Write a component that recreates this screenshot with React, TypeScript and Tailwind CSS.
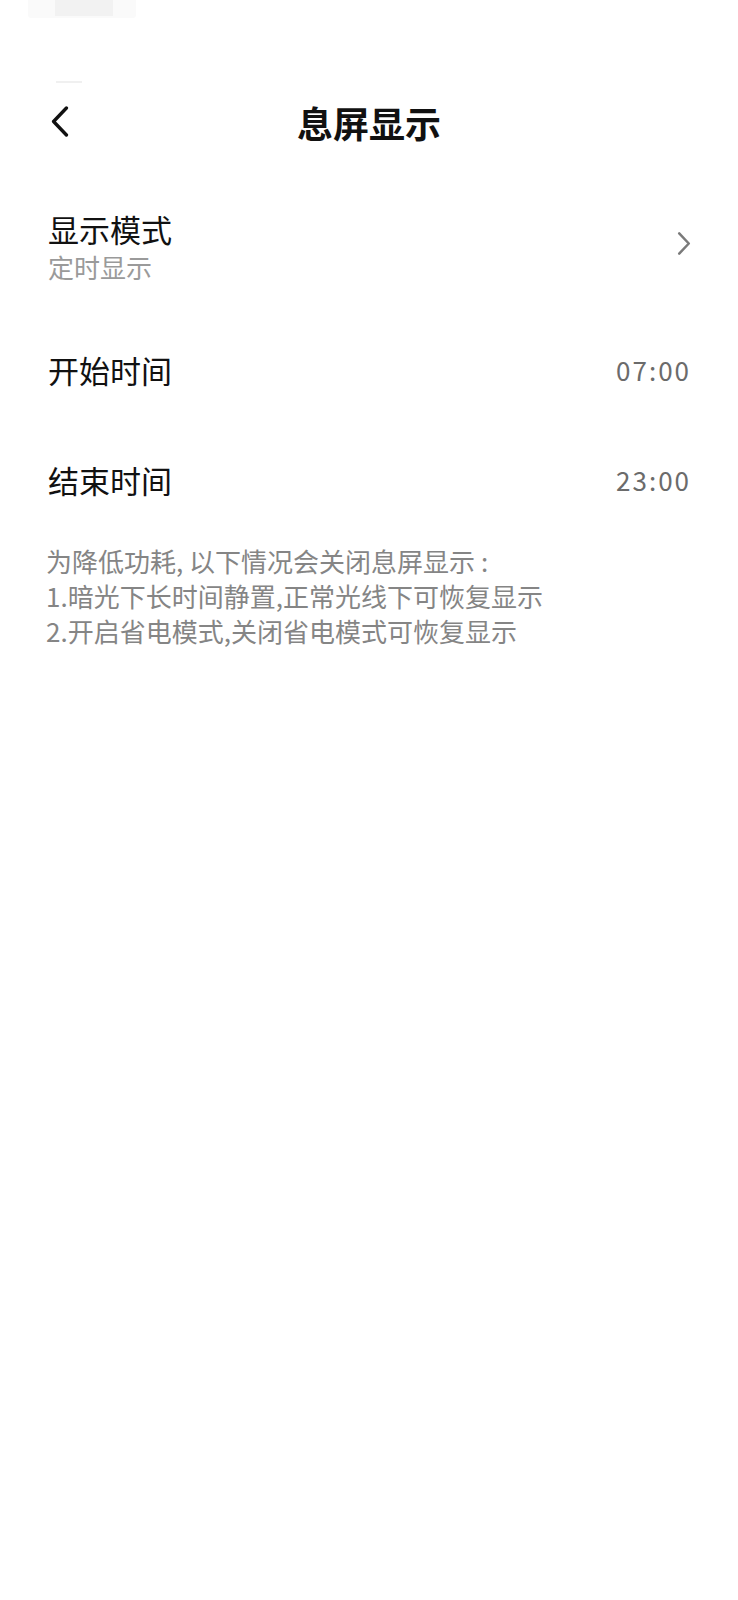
import React from "react";

const FONT = '"Noto Sans CJK SC", "Noto Sans", sans-serif';

function Chevron({ dir, className }: { dir: "left" | "right"; className?: string }) {
  return (
    <svg viewBox="0 0 14 24" className={className} fill="none">
      <path
        d={dir === "left" ? "M12 1.5 L2 12 L12 22.5" : "M2 1.5 L12 12 L2 22.5"}
        stroke="currentColor"
        strokeWidth="2.6"
        strokeLinecap="round"
        strokeLinejoin="round"
      />
    </svg>
  );
}

function TimeRow({ label, value }: { label: string; value: string }) {
  return (
    <div className="flex h-[110px] items-center justify-between pl-[48px] pr-[47px]">
      <span className="text-[31px] leading-[38px] text-[#111]">{label}</span>
      <span className="text-[26px] leading-[34px] tracking-[2px] text-[#6b6b6b]">{value}</span>
    </div>
  );
}

export default function App() {
  return (
    <div className="min-h-[1600px] w-full bg-white" style={{ fontFamily: FONT }}>
      {/* status bar (blanked) */}
      <div className="relative h-[82px]">
        <div className="absolute left-[28px] top-0 h-[18px] w-[108px] rounded-b-[3px] bg-[#fafafa]">
          <div className="ml-[27px] h-[16px] w-[58px] bg-[#f2f2f2]" />
        </div>
        <div className="absolute left-[56px] top-[81px] h-[2px] w-[26px] bg-[#f0f0f0]" />
      </div>

      {/* header */}
      <div className="relative flex h-[80px] items-center justify-center">
        <div className="absolute left-[51px] top-[24px] text-[#111]">
          <Chevron dir="left" className="h-[31px] w-[18px]" />
        </div>
        <h1 className="text-[36px] font-bold leading-[44px] text-[#111]">息屏显示</h1>
      </div>

      {/* display mode */}
      <div className="flex items-center justify-between pb-[32px] pl-[48px] pr-[47px] pt-[48px]">
        <div className="flex flex-col gap-[3px]">
          <span className="text-[31px] leading-[38px] text-[#111]">显示模式</span>
          <span className="text-[26px] leading-[32px] text-[#9a9a9a]">定时显示</span>
        </div>
        <Chevron dir="right" className="mb-[6px] h-[23px] w-[14px] text-[#7a7a7a]" />
      </div>

      <TimeRow label="开始时间" value="07:00" />
      <TimeRow label="结束时间" value="23:00" />

      {/* note */}
      <div className="px-[46px] pt-[8px] text-[26px] leading-[35px] text-[#858585]">
        <p>为降低功耗, 以下情况会关闭息屏显示 :</p>
        <p>1.暗光下长时间静置,正常光线下可恢复显示</p>
        <p>2.开启省电模式,关闭省电模式可恢复显示</p>
      </div>
    </div>
  );
}
